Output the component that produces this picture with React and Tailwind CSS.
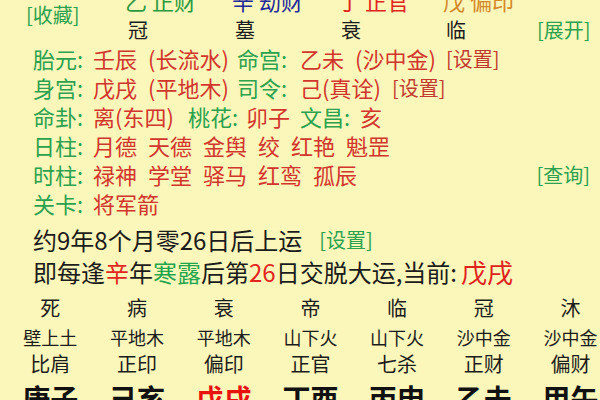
import React from "react";

const G = "text-[#2aa24e]";
const R = "text-[#d2352c]";
const RD = "text-[#c23a2e]";

function Row({ label, children, extra }) {
  return (
    <div className="flex h-[29px] items-center pl-[33px] text-[22px] leading-[29px]">
      <span className={`${G} w-[60px] shrink-0`}>{label}:</span>
      {children}
      {extra}
    </div>
  );
}

function Pair({ a, b, w }) {
  return (
    <span className={`${R} ${w} flex shrink-0 gap-[11px]`}>
      <span>{a}</span>
      <span>{b}</span>
    </span>
  );
}

export default function App() {
  const top = [
    { t: "乙 正财", c: "text-[#2a9a3e]" },
    { t: "辛 劫财", c: "text-[#23299c]" },
    { t: "丁 正官", c: "text-[#e0261f]" },
    { t: "戊 偏印", c: "text-[#d48a2a]" },
  ];
  const di = ["冠", "墓", "衰", "临"];
  const cs = ["死", "病", "衰", "帝", "临", "冠", "沐"];
  const ny = ["壁上土", "平地木", "平地木", "山下火", "山下火", "沙中金", "沙中金"];
  const ss = ["比肩", "正印", "偏印", "正官", "七杀", "正财", "偏财"];
  const gz = ["庚子", "己亥", "戊戌", "丁酉", "丙申", "乙未", "甲午"];
  return (
    <div
      className="relative h-[400px] w-[600px] overflow-hidden bg-[#fbf6ba] text-[#1c1c1c]"
      style={{ fontFamily: '"Noto Sans CJK SC", "Noto Sans", sans-serif' }}
    >
      <div className="mt-[-14px] grid grid-cols-[125px_107px_106px_105px_94px_1fr] grid-rows-[29px_29px]">
        <div className={`${G} row-span-2 flex items-center pl-[26px] text-[20px]`}>[收藏]</div>
        {top.map((x) => (
          <div key={x.t} className={`${x.c} text-[22px] leading-[29px] whitespace-nowrap`}>{x.t}</div>
        ))}
        <div />
        {di.map((x, i) => (
          <div key={i} className="pl-[3px] text-[20px] leading-[29px]">{x}</div>
        ))}
        <div className={`${G} text-[20px] leading-[29px]`}>[展开]</div>
      </div>

      <Row label="胎元">
        <Pair a="壬辰" b="(长流水)" w="w-[144px]" />
        <span className={`${G} w-[63px] shrink-0`}>命宫:</span>
        <Pair a="乙未" b="(沙中金)" w="w-[146px]" />
        <span className={`${RD} text-[20px]`}>[设置]</span>
      </Row>
      <Row label="身宫">
        <Pair a="戊戌" b="(平地木)" w="w-[144px]" />
        <span className={`${G} w-[63px] shrink-0`}>司令:</span>
        <span className={`${R} w-[92px] shrink-0`}>己(真诠)</span>
        <span className={`${RD} text-[20px]`}>[设置]</span>
      </Row>
      <Row label="命卦">
        <span className={`${R} w-[95px] shrink-0`}>离(东四)</span>
        <span className={`${G} w-[58px] shrink-0`}>桃花:</span>
        <span className={`${R} w-[54px] shrink-0`}>卯子</span>
        <span className={`${G} w-[60px] shrink-0`}>文昌:</span>
        <span className={R}>亥</span>
      </Row>
      <Row label="日柱">
        <span className={`${R} flex gap-[11px]`}>
          {["月德", "天德", "金舆", "绞", "红艳", "魁罡"].map((x) => (
            <span key={x}>{x}</span>
          ))}
        </span>
      </Row>
      <Row
        label="时柱"
        extra={<span className={`${G} ml-auto mr-[10px] text-[20px]`}>[查询]</span>}
      >
        <span className={`${R} flex gap-[11px]`}>
          {["禄神", "学堂", "驿马", "红鸾", "孤辰"].map((x) => (
            <span key={x}>{x}</span>
          ))}
        </span>
      </Row>
      <Row label="关卡">
        <span className={R}>将军箭</span>
      </Row>

      <div className="mt-[6px] flex h-[32px] items-center pl-[33px] text-[24px] leading-[32px]">
        <span>约9年8个月零26日后上运</span>
        <span className={`${G} ml-[17px] text-[20px]`}>[设置]</span>
      </div>
      <div className="flex h-[32px] items-center pl-[33px] text-[24px] leading-[32px] whitespace-nowrap">
        <span>
          即每逢<span className="text-[#e2261e]">辛</span>年<span className="text-[#1fa64c]">寒露</span>后第
          <span className="text-[#e2261e]">26</span>日交脱大运,当前:
        </span>
        <span className="ml-[4px] text-[26px] text-[#e0221c]">戊戌</span>
      </div>

      <div className="mt-[6px] grid grid-cols-[repeat(7,86.7px)] pl-[7px] text-center">
        {cs.map((x, i) => (
          <div key={"a" + i} className="h-[28px] text-[20px] leading-[28px]">{x}</div>
        ))}
        {ny.map((x, i) => (
          <div key={"b" + i} className="h-[30px] text-[18px] leading-[30px] whitespace-nowrap">{x}</div>
        ))}
        {ss.map((x, i) => (
          <div key={"c" + i} className="h-[24px] text-[20px] leading-[24px]">{x}</div>
        ))}
        {gz.map((x, i) => (
          <div
            key={"d" + i}
            className={`h-[44px] text-[28px] font-bold leading-[44px] ${i === 2 ? "text-[#e8120e]" : "text-[#111]"}`}
          >
            {x}
          </div>
        ))}
      </div>
    </div>
  );
}
